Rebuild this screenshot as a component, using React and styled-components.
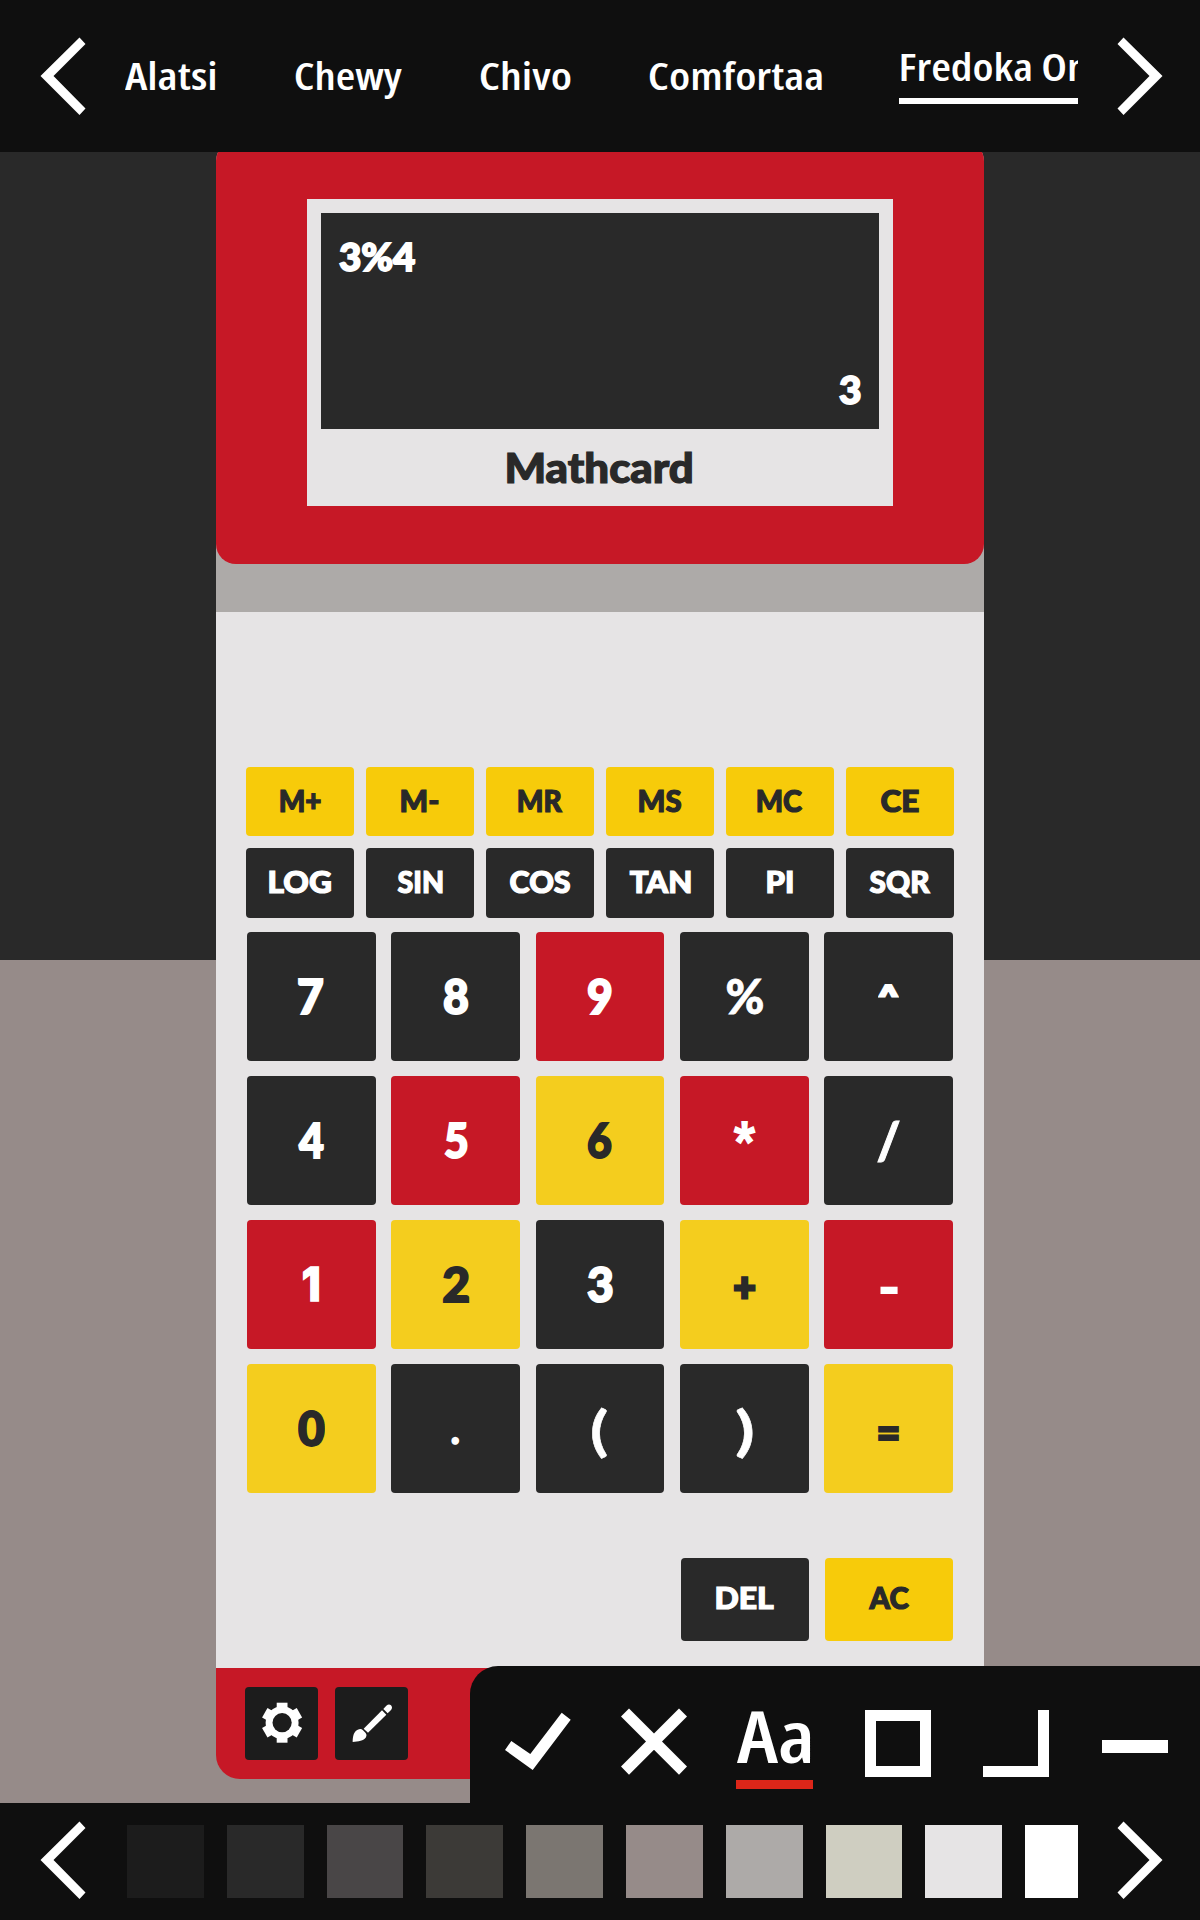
import React, { useLayoutEffect, useRef, useState } from "react";
import styled, { createGlobalStyle } from "styled-components";

const ink = "#292929";
const red = "#c61826";
const light = "#e6e4e5";
const bar = "#0f0f0f";

const tones = {
  dark: { bg: ink, fg: "#ffffff" },
  red: { bg: red, fg: "#ffffff" },
  yellow: { bg: "#f4cd1e", fg: ink },
  amber: { bg: "#f7cb0a", fg: ink },
};

const GlobalStyle = createGlobalStyle`
  *, *::before, *::after { box-sizing: border-box; }
  body { margin: 0; background: ${bar}; }
  button { border: 0; padding: 0; margin: 0; background: none; color: inherit; font: inherit; }
`;

const Page = styled.div`
  width: 1200px;
  height: 1920px;
  display: flex;
  flex-direction: column;
  overflow: hidden;
  color: #ffffff;
  font-family: "Lato", "Open Sans", sans-serif;
`;

/* ---------- text fitted to a width ---------- */

const FitBox = styled.span`
  display: flex;
  justify-content: flex-start;
  flex: none;
  white-space: nowrap;
`;

const FitInner = styled.span`
  display: block;
  flex: none;
  transform-origin: 0 50%;
`;

function FitText({ width, children }) {
  const ref = useRef(null);
  const [transform, setTransform] = useState("none");
  useLayoutEffect(() => {
    const cs = getComputedStyle(ref.current);
    const ctx = document.createElement("canvas").getContext("2d");
    ctx.font = `${cs.fontWeight} ${cs.fontSize} ${cs.fontFamily}`;
    if (cs.fontStretch === "87.5%") ctx.fontStretch = "semi-condensed";
    const m = ctx.measureText(children);
    const stroke = parseFloat(cs.webkitTextStrokeWidth) || 0;
    const inkWidth = m.actualBoundingBoxLeft + m.actualBoundingBoxRight + stroke;
    const scale = width / inkWidth;
    setTransform(`scaleX(${scale}) translateX(${m.actualBoundingBoxLeft + stroke / 2}px)`);
  }, [width, children]);
  return (
    <FitBox style={{ width }}>
      <FitInner ref={ref} style={{ transform }}>{children}</FitInner>
    </FitBox>
  );
}

/* ---------- font bar ---------- */

const FontBar = styled.header`
  height: 152px;
  flex: none;
  display: flex;
  align-items: center;
  background: ${bar};
  position: relative;
  z-index: 1;
`;

const ArrowButton = styled.button`
  flex: none;
  width: ${(p) => p.$width}px;
  height: 78px;
  display: flex;
  justify-content: ${(p) => (p.$next ? "flex-start" : "flex-end")};
  padding: ${(p) => (p.$next ? "0 0 0 39px" : `0 ${p.$gap}px 0 0`)};
  svg { display: block; flex: none; }
`;

const FontList = styled.nav`
  width: 954px;
  height: 56px;
  flex: none;
  display: flex;
  align-items: center;
  gap: 76.5px;
  overflow: hidden;
`;

const FontOption = styled.button`
  flex: none;
  height: ${(p) => (p.$active ? "56px" : "auto")};
  padding: 0 1px ${(p) => (p.$active ? "13px" : "2px")} ${(p) => (p.$active ? 2 : 1)}px;
  border-bottom: ${(p) => (p.$active ? "6px solid #ffffff" : "none")};
  font: 650 37px/37px "Open Sans", sans-serif;
  font-stretch: 87.5%;
`;

function Arrow({ next }) {
  const points = "39.5,0.5 45.5,7 13.5,39 45.5,71.5 39.5,78 0.5,39";
  return (
    <svg width="46" height="78" viewBox="0 0 46 78">
      <polygon points={points} fill="#ffffff" transform={next ? "translate(46 0) scale(-1 1)" : undefined} />
    </svg>
  );
}

/* ---------- stage and calculator ---------- */

const Stage = styled.main`
  position: relative;
  height: 1651px;
  flex: none;
  display: flex;
  justify-content: center;
  align-items: flex-start;
  overflow: hidden;
  background: linear-gradient(${ink} 0 808px, #968b89 808px);
`;

const Calculator = styled.section`
  width: 768px;
  margin-top: -11px;
  display: flex;
  flex-direction: column;
`;

const Hinge = styled.div`
  padding-bottom: 48px;
  background: #adaaa8;
  border-radius: 20px 20px 0 0;
`;

const Head = styled.div`
  height: 423px;
  padding: 58px 91px;
  background: ${red};
  border-radius: 20px;
`;

const Frame = styled.div`
  height: 307px;
  padding: 14px 14px 0;
  display: flex;
  flex-direction: column;
  background: ${light};
`;

const Screen = styled.div`
  height: 216px;
  flex: none;
  padding: 23px 18px 20px;
  display: flex;
  flex-direction: column;
  justify-content: space-between;
  background: ${ink};
  font-size: 38.5px;
  font-weight: 900;
  line-height: 40px;
  -webkit-text-stroke: 1.8px #ffffff;
`;

const Result = styled.div`
  display: flex;
  justify-content: flex-end;
`;

const Brand = styled.div`
  flex: 1;
  display: flex;
  align-items: center;
  justify-content: center;
  color: ${ink};
  font-size: 41px;
  font-weight: 900;
  line-height: 44px;
  -webkit-text-stroke: 1.2px ${ink};
`;

const Body = styled.div`
  height: 1056px;
  padding: 155px 30px 0;
  background: ${light};
`;

const SmallKeys = styled.div`
  display: grid;
  grid-template-columns: repeat(6, 108px);
  grid-template-rows: 69px 70px;
  gap: 12px;
`;

const Key = styled.button`
  display: flex;
  align-items: center;
  justify-content: center;
  padding-bottom: 2px;
  border-radius: 4px;
  background: ${(p) => tones[p.$tone].bg};
  color: ${(p) => tones[p.$tone].fg};
  font-family: "Lato", sans-serif;
  font-weight: 900;
  font-size: 29.5px;
  line-height: 1;
  -webkit-text-stroke: 1.2px ${(p) => tones[p.$tone].fg};
`;

const MainKeys = styled.div`
  margin: 14px 1px 0;
  display: grid;
  grid-template-columns: repeat(5, 1fr);
  grid-template-rows: repeat(4, 128.5px);
  gap: 15.5px;
`;

const MainKey = styled(Key)`
  font-family: ${(p) => (p.$font ? `"${p.$font}"` : `"Lato"`)}, sans-serif;
  font-weight: ${(p) => p.$weight || 900};
  font-size: ${(p) => p.$size || 48}px;
  padding-top: ${(p) => (p.$drop > 0 ? p.$drop * 2 : 0)}px;
  padding-bottom: ${(p) => (p.$drop > 0 ? 0 : 1 - (p.$drop || 0) * 2)}px;
  -webkit-text-stroke-width: ${(p) => p.$stroke ?? 2}px;
`;

const EditKeys = styled.div`
  margin: 65px 1px 0;
  display: flex;
  justify-content: flex-end;
  gap: 16px;
`;

const EditKey = styled(Key)`
  width: 128px;
  height: 83px;
  padding-bottom: 3px;
`;

const Foot = styled.div`
  height: 111px;
  padding: 19px 29px;
  display: flex;
  gap: 17px;
  background: ${red};
  border-radius: 0 0 24px 24px;
`;

const FootButton = styled.button`
  width: 73px;
  height: 73px;
  border-radius: 4px;
  background: #1c1c1c;
  svg { display: block; }
`;

/* ---------- style toolbar ---------- */

const Toolbar = styled.div`
  position: absolute;
  right: 0;
  bottom: 0;
  width: 730px;
  height: 137px;
  padding: 42px 0 0 35px;
  display: grid;
  grid-template-columns: 115.5px 115.5px 129px 118px 119px 66px;
  align-items: start;
  background: ${bar};
  border-radius: 28px 0 0 0;
`;

const Tool = styled.button`
  width: 66px;
  height: 68px;
  display: flex;
  align-items: flex-start;
  svg { display: block; }
`;

const FontTool = styled.button`
  width: 77px;
  height: 81px;
  padding: 0 1px;
  display: flex;
  align-items: flex-start;
  border-bottom: 9px solid #dc2619;
  font: 620 72px/54px "Open Sans", sans-serif;
  font-stretch: 87.5%;
`;

const SquareShape = styled.span`
  display: block;
  width: 66px;
  height: 67px;
  margin-top: 2px;
  border: 11.5px solid #ffffff;
  ${(p) => p.$corner && "border-top: 0; border-left: 0;"}
`;

const LineShape = styled.span`
  display: block;
  width: 66px;
  height: 12.5px;
  margin-top: 32px;
  background: #ffffff;
`;

/* ---------- palette ---------- */

const PaletteBar = styled.footer`
  height: 117px;
  flex: none;
  display: flex;
  background: ${bar};
`;

const PaletteArrow = styled(ArrowButton)`
  margin-top: 18px;
`;

const Swatches = styled.div`
  width: 951px;
  flex: none;
  padding-top: 22px;
  display: flex;
  gap: 23px;
  overflow: hidden;
`;

const Swatch = styled.button`
  flex: none;
  width: 76.8px;
  height: 73px;
  background: ${(p) => p.$color};
`;

/* ---------- data ---------- */

const fonts = [
  { name: "Alatsi", width: 91 },
  { name: "Chewy", width: 107 },
  { name: "Chivo", width: 90.5 },
  { name: "Comfortaa", width: 172.5 },
  { name: "Fredoka One", width: 206, active: true },
];

const smallKeys = [
  ["M+", 41, "amber"], ["M-", 38, "amber"], ["MR", 45, "amber"],
  ["MS", 43, "amber"], ["MC", 46, "amber"], ["CE", 38, "amber"],
  ["LOG", 63, "dark"], ["SIN", 46, "dark"], ["COS", 61, "dark"],
  ["TAN", 62, "dark"], ["PI", 26, "dark"], ["SQR", 62, "dark"],
];

const mainKeys = [
  { label: "7", width: 26, tone: "dark" },
  { label: "8", width: 26, tone: "dark" },
  { label: "9", width: 25, tone: "red" },
  { label: "%", width: 37, tone: "dark", stroke: 0.8 },
  { label: "^", width: 21, tone: "dark", size: 36, drop: 2, stroke: 2, font: "Inter", weight: 800 },
  { label: "4", width: 26, tone: "dark" },
  { label: "5", width: 24, tone: "red" },
  { label: "6", width: 25, tone: "yellow" },
  { label: "*", width: 23, tone: "red", size: 48, stroke: 2, font: "Roboto" },
  { label: "/", width: 23, tone: "dark", size: 51, stroke: 1 },
  { label: "1", width: 17, tone: "red", size: 47, stroke: 1.5, font: "Inter", weight: 800 },
  { label: "2", width: 27, tone: "yellow" },
  { label: "3", width: 26, tone: "dark" },
  { label: "+", width: 23, tone: "yellow", size: 40, drop: 2, stroke: 3 },
  { label: "-", width: 18, tone: "red", size: 46, drop: 3 },
  { label: "0", width: 27, tone: "yellow" },
  { label: ".", width: 9, tone: "dark", size: 40, drop: 1, stroke: 1.5 },
  { label: "(", width: 17, tone: "dark", size: 53, drop: 1, stroke: 0.5, weight: 700 },
  { label: ")", width: 17, tone: "dark", size: 53, drop: 1, stroke: 0.5, weight: 700 },
  { label: "=", width: 21, tone: "yellow", size: 46, drop: 4, stroke: 2 },
];

const colors = [
  "#1c1c1c", "#292929", "#494647", "#3c3a37", "#7b7671",
  "#968b89", "#adaaa8", "#cfcec1", "#e6e4e5", "#ffffff",
];

function GearIcon() {
  return (
    <svg width="73" height="73" viewBox="0 0 73 73">
      <g fill="#ffffff" transform="translate(37.1 35.7)">
        {[0, 60, 120, 180, 240, 300].map((a) => (
          <rect key={a} x="-5.4" y="-20" width="10.8" height="12" transform={`rotate(${a})`} />
        ))}
        <circle r="13" fill="none" stroke="#ffffff" strokeWidth="7" />
        <circle r="9.6" fill="#1c1c1c" />
      </g>
    </svg>
  );
}

function BrushIcon() {
  return (
    <svg width="73" height="73" viewBox="0 0 219 219" fill="#ffffff">
      <path d="M53 165C53 150 56 130 72 127Q78 124 84 130L92 138Q97 144 93 151C86 162 70 164 53 165Z" />
      <path d="M86 125L141 70L154 83L99 137Z" />
      <path d="M145 66L154 56Q162 49 168 55Q174 62 168 69L158 79Z" />
    </svg>
  );
}

export default function App() {
  return (
    <Page>
      <GlobalStyle />
      <FontBar>
        <ArrowButton $width={124} $gap={38} aria-label="Previous fonts"><Arrow /></ArrowButton>
        <FontList>
          {fonts.map((f) => (
            <FontOption key={f.name} $active={f.active}>
              <FitText width={f.width}>{f.name}</FitText>
            </FontOption>
          ))}
        </FontList>
        <ArrowButton $width={122} $next aria-label="Next fonts"><Arrow next /></ArrowButton>
      </FontBar>

      <Stage>
        <Calculator>
          <Hinge>
            <Head>
              <Frame>
                <Screen>
                  <FitText width={77}>3%4</FitText>
                  <Result><FitText width={22}>3</FitText></Result>
                </Screen>
                <Brand><FitText width={186}>Mathcard</FitText></Brand>
              </Frame>
            </Head>
          </Hinge>
          <Body>
            <SmallKeys>
              {smallKeys.map(([label, width, tone]) => (
                <Key key={label} $tone={tone}><FitText width={width}>{label}</FitText></Key>
              ))}
            </SmallKeys>
            <MainKeys>
              {mainKeys.map((k) => (
                <MainKey
                  key={k.label}
                  $tone={k.tone}
                  $size={k.size}
                  $drop={k.drop}
                  $stroke={k.stroke}
                  $font={k.font}
                  $weight={k.weight}
                >
                  <FitText width={k.width}>{k.label}</FitText>
                </MainKey>
              ))}
            </MainKeys>
            <EditKeys>
              <EditKey $tone="dark"><FitText width={58}>DEL</FitText></EditKey>
              <EditKey $tone="amber"><FitText width={42}>AC</FitText></EditKey>
            </EditKeys>
          </Body>
          <Foot>
            <FootButton aria-label="Settings"><GearIcon /></FootButton>
            <FootButton aria-label="Appearance"><BrushIcon /></FootButton>
          </Foot>
        </Calculator>

        <Toolbar>
          <Tool aria-label="Apply">
            <svg width="66" height="68" viewBox="0 0 66 68">
              <polygon points="0,42 6.3,33 25.3,46 56.7,4.7 65.7,11.7 27.7,62" fill="#ffffff" />
            </svg>
          </Tool>
          <Tool aria-label="Cancel">
            <svg width="66" height="68" viewBox="0 0 66 68">
              <polygon
                points="8,0.5 33,25.5 58,0.5 66,8.5 41,33.5 66,58.5 58,66.7 33,41.7 8,66.7 0,58.5 25,33.5 0,8.5"
                fill="#ffffff"
              />
            </svg>
          </Tool>
          <FontTool><FitText width={74}>Aa</FitText></FontTool>
          <Tool aria-label="Square"><SquareShape /></Tool>
          <Tool aria-label="Corner"><SquareShape $corner /></Tool>
          <Tool aria-label="Line"><LineShape /></Tool>
        </Toolbar>
      </Stage>

      <PaletteBar>
        <PaletteArrow $width={127} $gap={41} aria-label="Previous colors"><Arrow /></PaletteArrow>
        <Swatches>
          {colors.map((c) => <Swatch key={c} $color={c} aria-label={c} />)}
        </Swatches>
        <PaletteArrow $width={122} $next aria-label="Next colors"><Arrow next /></PaletteArrow>
      </PaletteBar>
    </Page>
  );
}
